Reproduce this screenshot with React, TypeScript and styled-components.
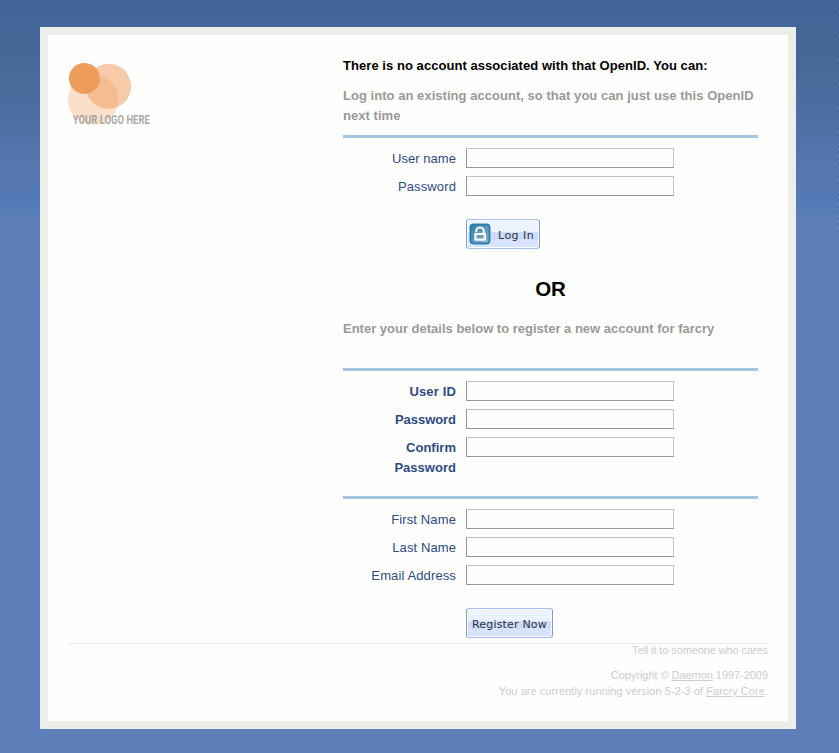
import React from "react";
import styled, { createGlobalStyle } from "styled-components";

const Global = createGlobalStyle`
  * { box-sizing: border-box; }
  html { background: #5d7eb8; }
  body {
    margin: 0;
    font: 13px/20px "Liberation Sans", Arial, sans-serif;
    color: #000;
  }
`;

const Page = styled.div`
  height: 753px;
  padding: 27px 43px 0 40px;
  background:
    linear-gradient(rgba(93, 126, 184, 0) 220px, #5d7eb8 290px),
    repeating-linear-gradient(60deg, rgba(30, 70, 110, 0.14) 0 1px, transparent 1px 3px) 0 0 / 8px 6px,
    linear-gradient(#43669a 0, #486a9a 50px, #4d6ea0 100px, #5274ab 140px, #5a78b2 165px, #567bb8 200px, #6082bc 222px, #5d7eb8 290px);
`;

const Card = styled.main`
  width: 756px;
  height: 702px;
  border: 8px solid #eceeea;
  background: #fefefd;
  padding: 20px 20px 0;
`;

const Columns = styled.div`
  display: flex;
  height: 588px;
`;

const LogoColumn = styled.div`
  width: 275px;
  flex: none;
  padding-top: 5px;
`;

const Content = styled.div`
  width: 415px;
`;

const Heading = styled.h1`
  margin: 0;
  padding-top: 1px;
  font-size: 13px;
  line-height: 20px;
  letter-spacing: 0.055px;
`;

const Intro = styled.p<{ $top: number; $bottom: number; $tracking?: number }>`
  margin: ${(p) => p.$top}px 0 ${(p) => p.$bottom}px;
  font-weight: bold;
  color: #999;
  letter-spacing: ${(p) => p.$tracking ?? 0}px;
`;

const Or = styled.h2`
  margin: 29px 0 0;
  font-size: 20.5px;
  line-height: 22px;
  text-align: center;
`;

const Fieldset = styled.div<{ $gap?: number }>`
  border-top: 3px solid #a5c5e3;
  padding-top: 10px;
  margin-bottom: ${(p) => p.$gap ?? 0}px;
  display: flex;
  flex-direction: column;
  gap: 8px;
`;

const Field = styled.label<{ $required?: boolean }>`
  display: flex;
  align-items: flex-start;
  gap: 10px;
  color: #2d4b85;
  font-weight: ${(p) => (p.$required ? "bold" : "normal")};
`;

const FieldName = styled.span<{ $tracking: number }>`
  width: 113px;
  padding: 1px 0 0 20px;
  margin-bottom: -1px;
  text-align: right;
  letter-spacing: ${(p) => p.$tracking}px;
`;

const Input = styled.input`
  width: 208px;
  height: 20px;
  padding: 1px 3px;
  border: 1px solid;
  border-color: #c3c3c3 #c3c3c3 #969696 #969696;
  border-radius: 0;
  background: #fefefd;
  font: inherit;
  outline: none;
`;

const Actions = styled.div`
  margin-top: 23px;
  padding-left: 123px;
  display: flex;
`;

const Button = styled.button<{ $width: number }>`
  width: ${(p) => p.$width}px;
  height: 30px;
  display: flex;
  align-items: center;
  padding: 0 0 0 2px;
  border: 1px solid #a6c0ef;
  border-left-color: #7f9cd0;
  border-right-color: #7f9cd0;
  border-radius: 3px;
  background: linear-gradient(#eef5ff 0, #e9f2ff 12px, #ccdcfd 12px, #ccdcfd 19px, #d5e2ff 19px, #d8e4ff 100%);
  box-shadow: inset 0 0 0 1px #f8fbff;
  color: #333;
  font: 11px/16px "DejaVu Sans", sans-serif;
  white-space: nowrap;
`;

const ButtonText = styled.span<{ $left: number; $tracking: number }>`
  margin-left: ${(p) => p.$left}px;
  padding-top: 3px;
  letter-spacing: ${(p) => p.$tracking}px;
`;

const Footer = styled.footer`
  border-top: 1px solid #e8eae8;
  color: #ccc;
  font-size: 11px;
  line-height: 16px;
  text-align: right;
`;

const FooterLine = styled.p<{ $gap?: number; $tracking: number }>`
  margin: 0 0 ${(p) => p.$gap ?? 0}px;
  letter-spacing: ${(p) => p.$tracking}px;

  &:first-child {
    margin-top: -2px;
  }
`;

const Link = styled.a`
  color: inherit;
  text-decoration: underline;
`;

const Logo = () => (
  <svg width="90" height="68" viewBox="0 0 90 68" aria-label="Your logo here" display="block">
    <circle cx="25.2" cy="39.5" r="25.2" fill="#fae0c9" />
    <circle cx="40.6" cy="26.3" r="22.5" fill="#f7cba9" />
    <clipPath id="big">
      <circle cx="25.2" cy="39.5" r="25.2" />
    </clipPath>
    <circle cx="40.6" cy="26.3" r="22.5" fill="#f3bd91" clipPath="url(#big)" />
    <circle cx="16.4" cy="18.4" r="15.5" fill="#ee9c5c" />
    <text
      transform="translate(4.8 64) scale(.72 1)"
      fontFamily="Roboto, sans-serif"
      fontWeight="700"
      fontSize="12.3"
      textLength="107"
      lengthAdjust="spacingAndGlyphs"
      fill="#999"
      fillOpacity=".85"
    >
      YOUR LOGO HERE
    </text>
  </svg>
);

const LockIcon = () => (
  <svg width="22" height="22" viewBox="0 0 22 22">
    <defs>
      <linearGradient id="lock" x1="0" y1="0" x2="1" y2="1">
        <stop offset="0" stopColor="#2c80ab" />
        <stop offset="1" stopColor="#8eafcb" />
      </linearGradient>
    </defs>
    <rect x=".5" y=".5" width="21" height="21" rx="4" fill="#80b0d0" />
    <rect x="1.5" y="1.5" width="19" height="19" rx="3" fill="url(#lock)" stroke="#267da5" strokeWidth="1.5" />
    <path d="M7.3 9V7.8a3.7 3.2 0 0 1 7.4 0V11" fill="none" stroke="#fff" strokeWidth="2" />
    <rect x="6.4" y="11" width="9.4" height="5.6" fill="none" stroke="#fff" strokeWidth="2.2" />
  </svg>
);

type RowProps = { name: string; type?: string; required?: boolean; tracking?: number };

const Row = ({ name, type = "text", required, tracking = 0 }: RowProps) => (
  <Field $required={required}>
    <FieldName $tracking={tracking}>{name}</FieldName>
    <Input type={type} />
  </Field>
);

export default function App() {
  return (
    <>
      <Global />
      <Page>
        <Card>
          <Columns>
            <LogoColumn>
              <Logo />
            </LogoColumn>
            <Content>
              <Heading>There is no account associated with that OpenID. You can:</Heading>
              <Intro $top={10} $bottom={9} $tracking={0.038}>
                Log into an existing account, so that you can just use this OpenID next time
              </Intro>
              <Fieldset>
                <Row name="User name" tracking={0.05} />
                <Row name="Password" type="password" tracking={0.12} />
              </Fieldset>
              <Actions>
                <Button $width={74}>
                  <LockIcon />
                  <ButtonText $left={7} $tracking={0.45}>
                    Log In
                  </ButtonText>
                </Button>
              </Actions>
              <Or>OR</Or>
              <Intro $top={19} $bottom={29}>
                Enter your details below to register a new account for farcry
              </Intro>
              <Fieldset $gap={19}>
                <Row name="User ID" required tracking={0.15} />
                <Row name="Password" type="password" required tracking={-0.05} />
                <Row name="Confirm Password" type="password" required tracking={0.02} />
              </Fieldset>
              <Fieldset>
                <Row name="First Name" tracking={0.12} />
                <Row name="Last Name" tracking={0.1} />
                <Row name="Email Address" tracking={0.12} />
              </Fieldset>
              <Actions>
                <Button $width={87}>
                  <ButtonText $left={3} $tracking={0.18}>
                    Register Now
                  </ButtonText>
                </Button>
              </Actions>
            </Content>
          </Columns>
          <Footer>
            <FooterLine $gap={9} $tracking={-0.1}>
              Tell it to someone who cares
            </FooterLine>
            <FooterLine $tracking={-0.05}>
              Copyright © <Link>Daemon</Link> 1997-2009
            </FooterLine>
            <FooterLine $tracking={0.055}>
              You are currently running version 5-2-3 of <Link>Farcry Core</Link>.
            </FooterLine>
          </Footer>
        </Card>
      </Page>
    </>
  );
}
